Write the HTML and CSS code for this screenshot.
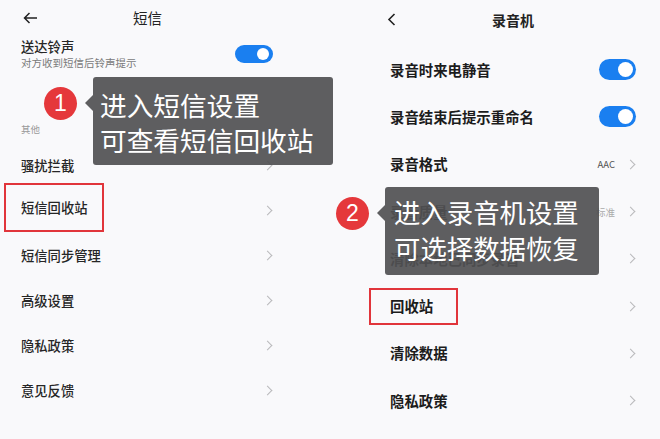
FILE: index.html
```html
<!DOCTYPE html>
<html lang="zh-CN">
<head>
  <meta charset="UTF-8">
  <title>短信回收站与录音机回收站</title>
  <link rel="stylesheet" href="styles.css">
</head>
<body>

  <div class="screen">

    <section class="panel panel-sms">
      <header class="bar">
        <svg class="back" width="15" height="12" viewBox="0 0 15 12"><path d="M14 6H1.5M6.5 1L1.5 6l5 5" fill="none" stroke="#222" stroke-width="1.5"/></svg>
        <h1 class="title">短信</h1>
      </header>

      <div class="switch-row">
        <div>
          <div class="label">送达铃声</div>
          <div class="sub">对方收到短信后铃声提示</div>
        </div>
        <span class="toggle toggle-sm"></span>
      </div>

      <div class="blank"></div>
      <div class="section">其他</div>

      <div class="row"><span class="label">骚扰拦截</span><span class="chev"></span></div>
      <div class="row"><span class="label mark mark-sms">短信回收站</span><span class="chev"></span></div>
      <div class="row"><span class="label">短信同步管理</span><span class="chev"></span></div>
      <div class="row"><span class="label">高级设置</span><span class="chev"></span></div>
      <div class="row"><span class="label">隐私政策</span><span class="chev"></span></div>
      <div class="row"><span class="label">意见反馈</span><span class="chev"></span></div>
    </section>

    <section class="panel panel-rec">
      <header class="bar">
        <svg class="back-lt" width="9" height="13" viewBox="0 0 9 13"><path d="M7.5 1L2 6.5l5.5 5.5" fill="none" stroke="#222" stroke-width="1.6"/></svg>
        <h1 class="title">录音机</h1>
      </header>

      <div class="row"><span class="label">录音时来电静音</span><span class="toggle"></span></div>
      <div class="row"><span class="label">录音结束后提示重命名</span><span class="toggle"></span></div>
      <div class="row"><span class="label">录音格式</span><span class="value">AAC</span><span class="chev"></span></div>
      <div class="row"><span class="label">录音质量</span><span class="value pale">标准</span><span class="chev"></span></div>
      <div class="row"><span class="label">清除本地已同步录音</span><span class="chev"></span></div>
      <div class="row"><span class="label mark mark-rec">回收站</span><span class="chev"></span></div>
      <div class="row"><span class="label">清除数据</span><span class="chev"></span></div>
      <div class="row"><span class="label">隐私政策</span><span class="chev"></span></div>
    </section>

    <div class="tip tip-1">
      <span class="num">1</span>
      <div class="bubble">进入短信设置<br>可查看短信回收站</div>
    </div>

    <div class="tip tip-2">
      <span class="num">2</span>
      <div class="bubble">进入录音机设置<br>可选择数据恢复</div>
    </div>

  </div>

</body>
</html>
```

FILE: styles.css
```css
body {
  margin: 0;
  background-color: #f9f9fb;
  font-family: "Noto Sans CJK SC", "Noto Sans", sans-serif;
  color: #222;
}

.screen {
  position: relative;
  display: flex;
  width: 660px;
  height: 439px;
  overflow: hidden;
}

.panel {
  width: 330px;
  box-sizing: border-box;
  display: flex;
  flex-direction: column;
}

.panel-sms {
  padding: 0 57px 0 21px;
}

.panel-rec {
  padding: 0 24px 0 60px;
}

.bar {
  display: flex;
  align-items: center;
  height: 36px;
}

.title {
  margin: 0;
  font-size: 14.5px;
  font-weight: 400;
  line-height: 20px;
}

.back {
  margin-left: 2px;
}

.panel-sms .title {
  margin-left: 95px;
}

.panel-rec .bar {
  height: 39px;
  margin-bottom: 7px;
}

.back-lt {
  margin-left: -3px;
}

.panel-rec .title {
  margin-left: 96px;
  font-size: 14px;
  font-weight: 700;
}

.label {
  font-size: 13.3px;
  font-weight: 500;
  line-height: 20px;
  color: #262626;
}

.switch-row {
  display: flex;
  justify-content: space-between;
  height: 40px;
  padding-top: 2px;
  box-sizing: border-box;
}

.switch-row .label {
  line-height: 17px;
}

.sub {
  margin-top: 2px;
  font-size: 10.5px;
  line-height: 12px;
  color: #7a7a7a;
}

.switch-row .toggle {
  margin-top: 7px;
}

.blank {
  height: 40px;
}

.section {
  height: 27px;
  line-height: 27px;
  font-size: 9.5px;
  color: #9a9a9a;
}

.row {
  display: flex;
  align-items: center;
  height: 45px;
}

.row .label {
  flex: 1;
}

.panel-rec .row {
  height: 47.3px;
}

.panel-rec .label {
  font-size: 14.4px;
  font-weight: 700;
  color: #1c1c1c;
}

.value {
  font-size: 9.5px;
  color: #555;
  margin-right: 12px;
}

.value.pale {
  color: #aaa;
}

.chev {
  width: 6px;
  height: 6px;
  border-top: 1.2px solid #b9b9bb;
  border-right: 1.2px solid #b9b9bb;
  transform: rotate(45deg);
  margin-right: 2px;
}

.mark {
  border: 2px solid #e1353b;
}

.row .mark {
  flex: 0 0 auto;
  margin-right: auto;
}

.mark-sms {
  padding: 12.5px 15px;
  margin: 0 0 6px -17px;
}

.mark-rec {
  padding: 6.5px 23px 6.5px 19px;
  margin-left: -21px;
}

.toggle {
  position: relative;
  width: 37px;
  height: 21px;
  border-radius: 11px;
  background-color: #1a7ff0;
}

.toggle::after {
  content: "";
  position: absolute;
  top: 3px;
  right: 3px;
  width: 15px;
  height: 15px;
  border-radius: 50%;
  background-color: #fff;
}

.toggle-sm {
  width: 38px;
  height: 18px;
  border-radius: 9px;
}

.toggle-sm::after {
  width: 12px;
  height: 12px;
  right: 4px;
}

.tip {
  position: absolute;
  display: flex;
  align-items: flex-start;
  gap: 16px;
}

.tip-1 {
  left: 44px;
  top: 77px;
}

.tip-2 {
  left: 336px;
  top: 187px;
}

.num {
  width: 33px;
  height: 33px;
  margin-top: 9.5px;
  border-radius: 50%;
  background-color: #e5383b;
  color: #fff;
  font-family: "Liberation Sans", sans-serif;
  font-size: 23px;
  line-height: 33px;
  text-align: center;
}

.bubble {
  position: relative;
  height: 88px;
  box-sizing: border-box;
  border-radius: 3px;
  background-color: rgba(80, 80, 82, 0.92);
  color: #fff;
  font-size: 26.7px;
  line-height: 35px;
}

.bubble::before {
  content: "";
  position: absolute;
  left: -8px;
  top: 18px;
  border-top: 8px solid transparent;
  border-bottom: 8px solid transparent;
  border-right: 8px solid rgba(80, 80, 82, 0.92);
}

.tip-1 .bubble {
  width: 240px;
  padding: 10px 0 0 7px;
}

.tip-2 .bubble {
  width: 214px;
  padding: 7px 0 0 9px;
  font-size: 26.4px;
  line-height: 36px;
}
```
